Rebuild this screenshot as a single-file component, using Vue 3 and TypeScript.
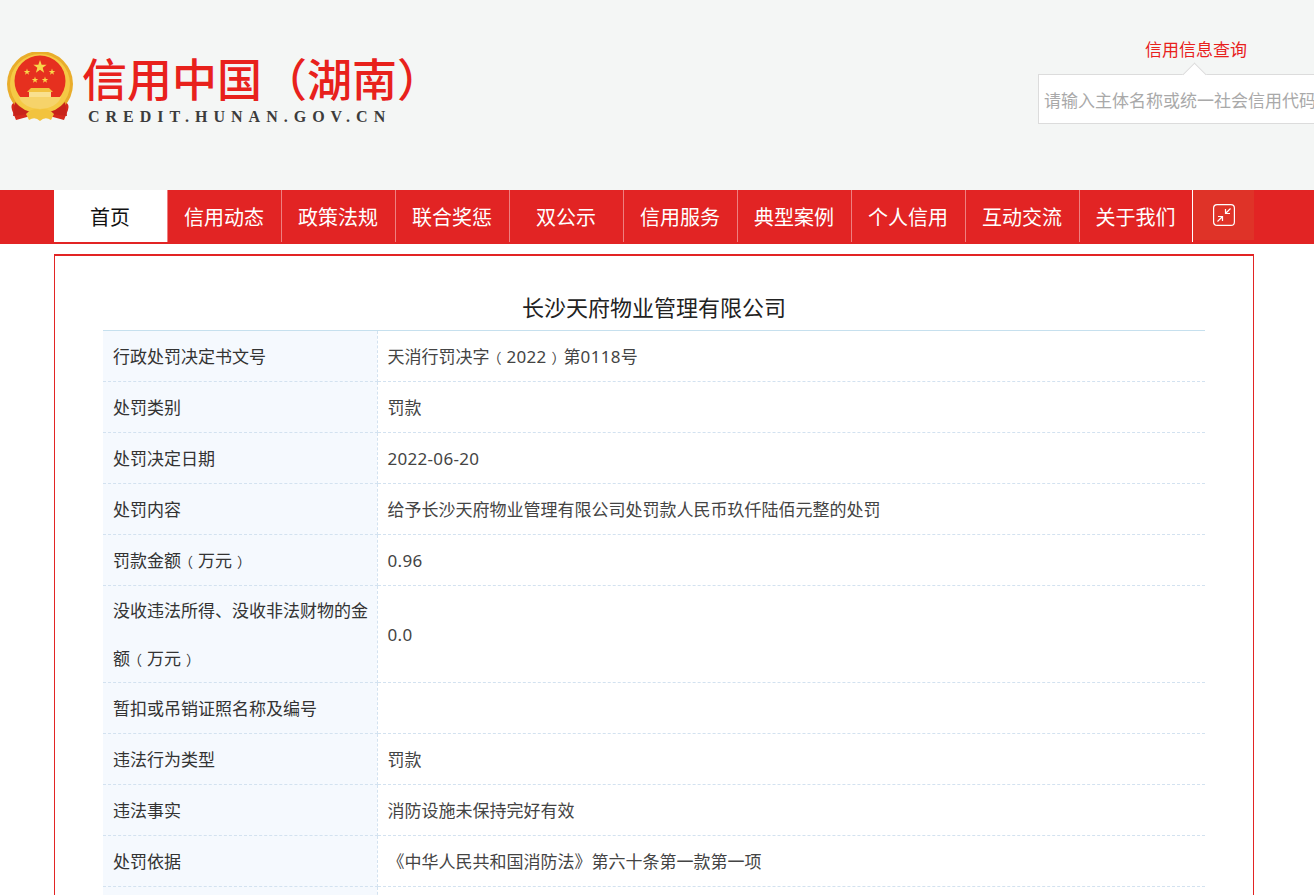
<template>
  <div class="page">
    <header class="top">
      <div class="logo">
        <svg class="emblem" viewBox="0 0 66 70" width="66" height="70">
          <path d="M8 50 Q3 52 5 58 L9 68 L20 65 L33 62 L46 65 L57 68 L61 58 Q63 52 58 50 Z" fill="#d5281c" />
          <circle cx="33" cy="32" r="33" fill="#e9ad2b" />
          <circle cx="33" cy="32" r="30" fill="#f5c945" />
          <circle cx="33" cy="29" r="25.5" fill="#e6301f" />
          <polygon v-for="(s, i) in stars" :key="i" :points="starPoints(s.x, s.y, s.r)" fill="#f8d64a" />
          <path d="M12 45 H54 Q50 56 33 57 Q16 56 12 45 Z" fill="#f6d36a" />
          <path d="M24 36 H42 L46 40 H20 Z" fill="#f2c13f" />
          <rect x="22" y="40" width="22" height="5" fill="#f9e08e" />
          <path d="M8 50 Q18 62 33 60 Q48 62 58 50 L60 64 L46 62 L33 59 L20 62 L6 64 Z" fill="#c8231a" />
          <path d="M19 62 Q26 55 33 58 Q40 55 47 62 L44 68 Q38 64 33 69 Q28 64 22 68 Z" fill="#f2c33e" />
        </svg>
        <div class="logo-text">
          <div class="logo-title">信用中国（湖南）</div>
          <div class="logo-sub">CREDIT.HUNAN.GOV.CN</div>
        </div>
      </div>
      <div class="search">
        <div class="search-label">信用信息查询</div>
        <div class="search-box">
          <span class="arrow"></span>
          <input class="search-input" type="text" placeholder="请输入主体名称或统一社会信用代码" />
        </div>
      </div>
    </header>

    <nav class="nav">
      <div class="nav-inner">
        <a v-for="(item, i) in navItems" :key="item" class="nav-item" :class="{ active: i === 0 }">{{ item }}</a>
        <div class="nav-toggle">
          <svg viewBox="0 0 22 22" width="22" height="22" fill="none" stroke="#fff" stroke-width="1.2">
            <rect x="0.6" y="0.6" width="20.8" height="20.8" rx="3.5" />
            <path d="M17.5 4.5 L12.5 9.5 M12.5 5 V9.5 H17" />
            <path d="M4.5 17.5 L9.5 12.5 M5 12.5 H9.5 V17" />
          </svg>
        </div>
      </div>
    </nav>

    <main class="box">
      <h1 class="title">长沙天府物业管理有限公司</h1>
      <table class="detail">
        <tbody>
          <tr v-for="row in rows" :key="row.label">
            <th>
              <div class="cell"><span v-for="(p, i) in split(row.label)" :key="i" :class="p.cls">{{ p.text }}</span></div>
            </th>
            <td>
              <div class="cell"><span v-for="(p, i) in split(row.value)" :key="i" :class="p.cls">{{ p.text }}</span></div>
            </td>
          </tr>
          <tr>
            <th></th>
            <td></td>
          </tr>
        </tbody>
      </table>
    </main>
  </div>
</template>

<script setup lang="ts">
const navItems = ['首页', '信用动态', '政策法规', '联合奖惩', '双公示', '信用服务', '典型案例', '个人信用', '互动交流', '关于我们']

const rows = [
  { label: '行政处罚决定书文号', value: '天消行罚决字（2022）第0118号' },
  { label: '处罚类别', value: '罚款' },
  { label: '处罚决定日期', value: '2022-06-20' },
  { label: '处罚内容', value: '给予长沙天府物业管理有限公司处罚款人民币玖仟陆佰元整的处罚' },
  { label: '罚款金额（万元）', value: '0.96' },
  { label: '没收违法所得、没收非法财物的金额（万元）', value: '0.0' },
  { label: '暂扣或吊销证照名称及编号', value: '' },
  { label: '违法行为类型', value: '罚款' },
  { label: '违法事实', value: '消防设施未保持完好有效' },
  { label: '处罚依据', value: '《中华人民共和国消防法》第六十条第一款第一项' }
]

const stars = [
  { x: 33, y: 15, r: 7 },
  { x: 20, y: 20, r: 3.4 },
  { x: 45, y: 20, r: 3.4 },
  { x: 28, y: 28, r: 3.4 },
  { x: 38, y: 28, r: 3.4 }
]

// 全角括号和数字的字宽跟默认字体不一样，单独包一层
function split(text: string) {
  return text
    .split(/([（）]|[\d.-]+)/)
    .filter(Boolean)
    .map((t) => ({
      text: t,
      cls: t === '（' || t === '）' ? 'paren' : /^[\d.-]+$/.test(t) ? 'num' : ''
    }))
}

function starPoints(cx: number, cy: number, r: number) {
  const pts: string[] = []
  for (let i = 0; i < 10; i++) {
    const rad = i % 2 === 0 ? r : r * 0.4
    const a = (Math.PI / 5) * i - Math.PI / 2
    pts.push(`${(cx + rad * Math.cos(a)).toFixed(2)},${(cy + rad * Math.sin(a)).toFixed(2)}`)
  }
  return pts.join(' ')
}
</script>

<style>
html,
body {
  margin: 0;
  overflow: hidden;
  background: #fff;
}
</style>

<style scoped>
.page {
  width: 1314px;
  height: 895px;
  overflow: hidden;
  font-family: "Noto Sans", "Noto Sans CJK SC", sans-serif;
}

.top {
  display: flex;
  height: 190px;
  background: #f4f6f5;
}

.logo {
  display: flex;
  align-items: flex-start;
  width: 1038px;
  padding: 52px 0 0 7px;
  box-sizing: border-box;
  flex-shrink: 0;
}

.emblem {
  flex-shrink: 0;
}

.logo-text {
  margin-left: 9px;
}

.logo-title {
  margin-top: 2px;
  font-size: 45px;
  line-height: 52px;
  font-weight: 500;
  color: #e8211c;
  white-space: nowrap;
}

.logo-sub {
  margin: 1px 0 0 6px;
  font-family: "Liberation Serif", serif;
  font-size: 16px;
  line-height: 20px;
  font-weight: 700;
  letter-spacing: 6px;
  color: #3c3c3c;
  white-space: nowrap;
}

.search {
  flex-shrink: 0;
  width: 318px;
  padding-top: 37px;
}

.search-label {
  width: 316px;
  padding-left: 107px;
  box-sizing: border-box;
  font-size: 17px;
  line-height: 26px;
  color: #e8211c;
}

.search-box {
  position: relative;
  margin-top: 11px;
  width: 316px;
  height: 50px;
  box-sizing: border-box;
  background: #fff;
  border: 1px solid #dcdcdc;
}

.arrow {
  position: absolute;
  left: 147px;
  top: -9px;
  width: 16px;
  height: 16px;
  background: #fff;
  border-left: 1px solid #dcdcdc;
  border-top: 1px solid #dcdcdc;
  transform: rotate(45deg);
}

.search-input {
  position: relative;
  display: block;
  width: 100%;
  height: 100%;
  padding: 2px 5px 0;
  box-sizing: border-box;
  border: none;
  outline: none;
  background: transparent;
  font-family: inherit;
  font-size: 17px;
}

.search-input::placeholder {
  color: #a9a9a9;
}

.nav {
  height: 54px;
  background: #e22424;
}

.nav-inner {
  display: flex;
  margin-left: 54px;
  width: 1200px;
}

.nav-item {
  display: block;
  width: 114px;
  height: 52px;
  box-sizing: border-box;
  padding-right: 1px;
  border-right: 1px solid #ee8080;
  text-align: center;
  font-size: 20px;
  line-height: 56px;
  color: #fff;
}

.nav-item.active {
  background: #fff;
  color: #111;
}

.nav-item:nth-child(10) {
  width: 113px;
  border-right-color: #fff;
}

.nav-toggle {
  display: flex;
  justify-content: center;
  align-items: center;
  width: 61px;
  height: 50px;
  background: #df3328;
}

.box {
  margin: 10px 0 0 54px;
  width: 1200px;
  box-sizing: border-box;
  padding: 0 48px;
  border: 1px solid #e22424;
  border-top-width: 2px;
}

.title {
  margin: 0;
  height: 74px;
  padding-top: 33px;
  box-sizing: border-box;
  text-align: center;
  font-size: 22px;
  line-height: 36px;
  font-weight: 400;
  color: #222;
}

.detail {
  width: 1102px;
  table-layout: fixed;
  border-collapse: collapse;
  border-top: 1px solid #c6e0ee;
  font-size: 17px;
  line-height: 48px;
}

.detail th,
.detail td {
  height: 51px;
  padding: 0 10px;
  box-sizing: border-box;
  border-bottom: 1px dashed #d3e2f0;
  text-align: left;
  font-weight: 400;
  color: #444;
}

.detail th {
  width: 274px;
  padding-right: 8px;
  background: #f5f9fe;
  border-right: 1px dashed #d3e2f0;
  color: #333;
}

.cell {
  margin: 1px 0 -1px;
}

.paren {
  display: inline-block;
  width: 17px;
  line-height: 1;
  text-align: center;
  font-size: 14px;
  font-feature-settings: "halt";
}

.num {
  letter-spacing: 0.3px;
}
</style>
